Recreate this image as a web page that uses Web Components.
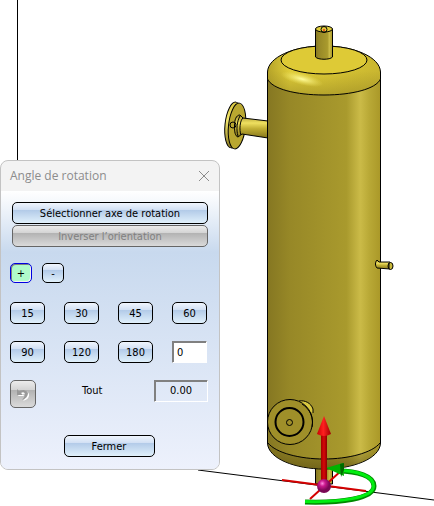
<!DOCTYPE html>
<html lang="fr">
<head>
<meta charset="utf-8">
<title>Angle de rotation</title>
<style>
  body { margin: 0; background: #fff; font: 12px/16px "DejaVu Sans Condensed", Tahoma, sans-serif; }
</style>
</head>
<body>
<cad-workspace>
  <vessel-view></vessel-view>
  <rotation-dialog slot="window" heading="Angle de rotation"></rotation-dialog>
</cad-workspace>

<script>
// Free canvas: the model fills it, tool windows float above
class CadWorkspace extends HTMLElement {
  constructor() {
    super();
    this.attachShadow({ mode: 'open' });
    this.shadowRoot.innerHTML = `
      <style>
        :host { display: block; position: relative; overflow: hidden; min-height: 100vh; }
        .window { position: absolute; left: 0; top: 160px; }
      </style>
      <slot></slot>
      <div class="window"><slot name="window"></slot></div>`;
  }
}
customElements.define('cad-workspace', CadWorkspace);

class VesselView extends HTMLElement {
  constructor() {
    super();
    this.attachShadow({ mode: 'open' });
    this.shadowRoot.innerHTML = `
      <style>
        :host { display: block; }
        svg { display: block; width: 100%; height: auto; }
        .edge { stroke: #000; stroke-width: 1; }
        .line { fill: none; stroke: #000; stroke-width: 1; }
      </style>
      <svg viewBox="0 0 434 506" role="img" aria-label="Cuve">
        <defs>
          <linearGradient id="shell">
            <stop offset="0" stop-color="#857722"/>
            <stop offset=".2" stop-color="#978827"/>
            <stop offset=".7" stop-color="#a99a2d"/>
            <stop offset=".82" stop-color="#cbbb48"/>
            <stop offset=".9" stop-color="#b9a936"/>
            <stop offset="1" stop-color="#aa9828"/>
          </linearGradient>
          <linearGradient id="dome">
            <stop offset="0" stop-color="#b5a329"/>
            <stop offset=".2" stop-color="#e0cd38"/>
            <stop offset=".5" stop-color="#dcc935"/>
            <stop offset="1" stop-color="#c9b630"/>
          </linearGradient>
          <linearGradient id="domeShade" x2="0" y2="1">
            <stop offset=".5" stop-color="#8c7d22" stop-opacity="0"/>
            <stop offset="1" stop-color="#8c7d22" stop-opacity=".5"/>
          </linearGradient>
          <linearGradient id="base" x2="0" y2="1">
            <stop offset="0" stop-color="#5b4f13" stop-opacity="0"/>
            <stop offset="1" stop-color="#5b4f13" stop-opacity=".65"/>
          </linearGradient>
          <linearGradient id="pipe" x2="0" y2="1">
            <stop offset="0" stop-color="#a39129"/>
            <stop offset=".35" stop-color="#efe060"/>
            <stop offset=".6" stop-color="#c0ae33"/>
            <stop offset="1" stop-color="#85761d"/>
          </linearGradient>
          <linearGradient id="rim" x2="0" y2="1">
            <stop offset="0" stop-color="#d8c640"/>
            <stop offset=".4" stop-color="#f5e870"/>
            <stop offset="1" stop-color="#8c7c20"/>
          </linearGradient>
          <linearGradient id="shaft">
            <stop offset="0" stop-color="#a00000"/>
            <stop offset=".5" stop-color="#d80808"/>
            <stop offset="1" stop-color="#8c0000"/>
          </linearGradient>
          <linearGradient id="cone">
            <stop offset="0" stop-color="#c80000"/>
            <stop offset=".45" stop-color="#ff2020"/>
            <stop offset="1" stop-color="#a00000"/>
          </linearGradient>
          <radialGradient id="ball" cx=".38" cy=".32">
            <stop offset="0" stop-color="#ff8be0"/>
            <stop offset=".4" stop-color="#cc1a90"/>
            <stop offset="1" stop-color="#7a0755"/>
          </radialGradient>
          <radialGradient id="glint">
            <stop offset="0" stop-color="#fffda0"/>
            <stop offset="1" stop-color="#f4e85e" stop-opacity="0"/>
          </radialGradient>
        </defs>

        <path class="line" d="M17.5 0V160M198 470L434 500"/>

        <!-- side nozzle and its flange -->
        <ellipse class="edge" fill="url(#rim)" cx="233.500" cy="125" rx="8.500" ry="23" transform="rotate(6 233.500 125)"/>
        <ellipse class="edge" fill="#b9a730" cx="237" cy="126" rx="8.500" ry="23" transform="rotate(6 237 126)"/>
        <path class="edge" fill="url(#pipe)" d="M240 115C236 115 234.500 120 234.500 126S235 136 238 137L242 134L268 138V121L243 118Z"/>
        <path class="line" d="M243 118C240 120 239 130 241 135M240 116C237 121 236 130 238 136"/>
        <circle class="line" cx="233" cy="125" r="3"/>

        <!-- bottom outlet -->
        <path class="edge" fill="url(#shell)" d="M315.5 464V484H332.5V464Z"/>

        <!-- shell -->
        <path class="edge" fill="url(#shell)" d="M267.5 79V443C268 459 296 469 324 469S380 459 380.5 443V79Z"/>
        <path fill="url(#base)" d="M268 443C276 453 300 459 324 459S372 453 380 443C378 460 352 468.500 324 468.500S270 460 268 443Z"/>
        <path class="line" d="M268 443C276 453 300 459 324 459S372 453 380 443"/>

        <!-- top head -->
        <path fill="url(#dome)" d="M267.500 79V72C268 57 294 46 324 46S380 57 380.500 72V79C376 89 352 95 324 95S272 89 267.500 79Z"/>
        <path fill="url(#domeShade)" d="M267.500 79V72C268 57 294 46 324 46S380 57 380.500 72V79C376 89 352 95 324 95S272 89 267.500 79Z"/>
        <ellipse fill="url(#glint)" cx="302" cy="79" rx="22" ry="6" transform="rotate(14 302 79)"/>
        <path class="line" d="M267.500 79V72C268 57 294 46 324 46S380 57 380.500 72V79C376 89 352 95 324 95S272 89 267.500 79Z"/>
        <ellipse class="edge" fill="#deca36" cx="324" cy="60" rx="43" ry="14"/>
        <path class="edge" fill="url(#shell)" d="M315.500 29V57C318 60 330 60 332.500 57V29Z"/>
        <ellipse class="edge" fill="#e0ce3c" cx="324" cy="29" rx="8.500" ry="3"/>
        <circle class="line" cx="324" cy="29.500" r="3"/>
        <circle fill="#f03010" cx="324" cy="30" r="1"/>

        <!-- gauge stub -->
        <path class="edge" fill="url(#pipe)" d="M377 260L379 262L390 262V269L377 268C375 266 375 262 377 260Z"/>
        <ellipse class="edge" fill="#c9b83a" cx="390.500" cy="266" rx="2.500" ry="3.500"/>
        <path class="line" d="M389 263V269"/>

        <!-- manhole -->
        <path fill="#d8c740" d="M299 401C305 400 311 403 313 409V413L300 408Z"/>
        <path class="line" d="M299 401C305 400 311 403 313 409V413"/>
        <circle class="edge" fill="#9f8f29" cx="290" cy="422" r="22.500"/>
        <path class="line" d="M302 404C310 409 314 418 312 427"/>
        <circle class="line" cx="289.500" cy="422" r="14" style="stroke-width: 2"/>
        <circle class="line" cx="289.500" cy="422.500" r="3"/>

        <!-- rotation triad -->
        <path d="M282 480L366 491M310 499L342 470" fill="none" stroke="#d40000" stroke-width="2"/>
        <path d="M305 502C340 503 374 499 374 486C374 476 357 471 338 471" fill="none" stroke="#008a00" stroke-width="5"/>
        <path d="M305 501.500C340 502.500 373.500 498 373.500 486C373.500 476 357 470.500 338 470.500" fill="none" stroke="#00ee10" stroke-width="3"/>
        <path fill="#00b400" d="M326 468L343 463L344 476Z"/>
        <path fill="#006a00" d="M340 464L344 463V470L341 477Z"/>
        <path fill="url(#shaft)" d="M321 434H327V482H321Z"/>
        <path fill="url(#cone)" d="M324 416L317 434Q324 438 331 434Z"/>
        <circle fill="url(#ball)" cx="324" cy="486" r="7"/>
      </svg>`;
  }
}
customElements.define('vessel-view', VesselView);

// Glossy button. tone="on" is the pressed state
class GlossButton extends HTMLElement {
  constructor() {
    super();
    this.attachShadow({ mode: 'open' });
  }
  connectedCallback() {
    const off = this.hasAttribute('disabled') ? 'disabled' : '';
    const label = this.getAttribute('label');
    this.shadowRoot.innerHTML = `
      <style>
        :host { display: block; height: 22px; }
        button {
          display: flex; align-items: center; justify-content: center;
          box-sizing: border-box; width: 100%; height: 100%; padding: 1px 0 0;
          border: 1px solid #000; border-radius: 5px;
          background: linear-gradient(#f0f5fd, #d2e0f4 34%, #b2cae8 35%, #e0f0fb);
          color: #000; font: inherit; white-space: nowrap;
        }
        button:disabled {
          border-color: #666; color: #808080;
          background: linear-gradient(#ececec, #d4d4d4 34%, #b2b2b2 35%, #dadada);
        }
        :host([tone="on"]) button {
          border-color: #0000e0; background: #b0fbca;
          box-shadow: inset 1px 1px #808080, inset -1px -1px #f4f4f4;
        }
      </style>
      <button type="button" ${off} ${label ? `aria-label="${label}"` : ''}><slot></slot></button>`;
  }
}
customElements.define('gloss-button', GlossButton);

class RotationDialog extends HTMLElement {
  constructor() {
    super();
    this.attachShadow({ mode: 'open' });
  }
  connectedCallback() {
    this.shadowRoot.innerHTML = `
      <style>
        :host {
          display: block; box-sizing: border-box; min-width: 220px; overflow: hidden;
          border: 1px solid #c3c3c3; border-radius: 8px; background: #f3f3f3;
        }
        header {
          display: flex; align-items: center; justify-content: space-between;
          height: 30px; padding: 0 9px; color: #8c8c8c;
          font: 12px/16px "Open Sans", "Segoe UI", sans-serif;
        }
        h1 { margin: 0; font: inherit; }
        header button { display: flex; padding: 0; border: 0; background: none; color: inherit; }
        .body {
          display: flex; flex-direction: column; padding: 11px 11px 12px 9px;
          background: linear-gradient(#fff, #c8d9ee 22%, #edf1fc);
          font-size: 11px; line-height: 14px;
        }
        .axis { display: grid; gap: 1px; padding-left: 2px; }
        .sense { display: flex; gap: 10px; margin: 16px 0 19px; }
        .sense gloss-button { width: 22px; height: 20px; }
        .angles { display: grid; grid-template-columns: repeat(4, 35px); gap: 17px 19px; }
        input, output {
          box-sizing: border-box; width: 100%; height: 22px; margin: 0; color: #000; font: inherit;
          border: 1px solid; border-color: #808080 #fff #fff #808080;
          box-shadow: inset 1px 1px #808080;
        }
        input { padding: 0 4px; background: #fff; }
        .total {
          display: grid; grid-template-columns: 26px 1fr 54px; align-items: start;
          margin: 17px 0 27px;
        }
        .total gloss-button { height: 28px; }
        label { padding: 4px 0 0 46px; }
        output { display: grid; place-items: center; }
        .close { width: 91px; align-self: center; }
      </style>
      <header>
        <h1>${this.getAttribute('heading')}</h1>
        <button type="button" aria-label="Quitter">
          <svg width="12" height="12" viewBox="0 0 12 12"><path d="M1 1L11 11M11 1L1 11" stroke="currentColor"/></svg>
        </button>
      </header>
      <div class="body">
        <div class="axis">
          <gloss-button>Sélectionner axe de rotation</gloss-button>
          <gloss-button disabled>Inverser l’orientation</gloss-button>
        </div>
        <div class="sense">
          <gloss-button tone="on">+</gloss-button>
          <gloss-button>-</gloss-button>
        </div>
        <div class="angles">
          ${[15, 30, 45, 60, 90, 120, 180].map(a => `<gloss-button>${a}</gloss-button>`).join('')}
          <input type="text" value="0" aria-label="Angle">
        </div>
        <div class="total">
          <gloss-button disabled label="Annuler">
            <svg width="16" height="16" viewBox="0 0 16 16">
              <path d="M3 9L9 9L8 7Q10 6 11 8Q11 11 8 14Q15 12 14 7Q12 2 6 4Z" fill="#fff"/>
              <path d="M2 2V8H8L6 6Q9 4 10 7Q10 10 7 13Q13 11 13 6Q11 1 4 4Z" fill="#999"/>
            </svg>
          </gloss-button>
          <label for="total">Tout</label>
          <output id="total">0.00</output>
        </div>
        <gloss-button class="close">Fermer</gloss-button>
      </div>`;
  }
}
customElements.define('rotation-dialog', RotationDialog);
</script>
</body>
</html>
